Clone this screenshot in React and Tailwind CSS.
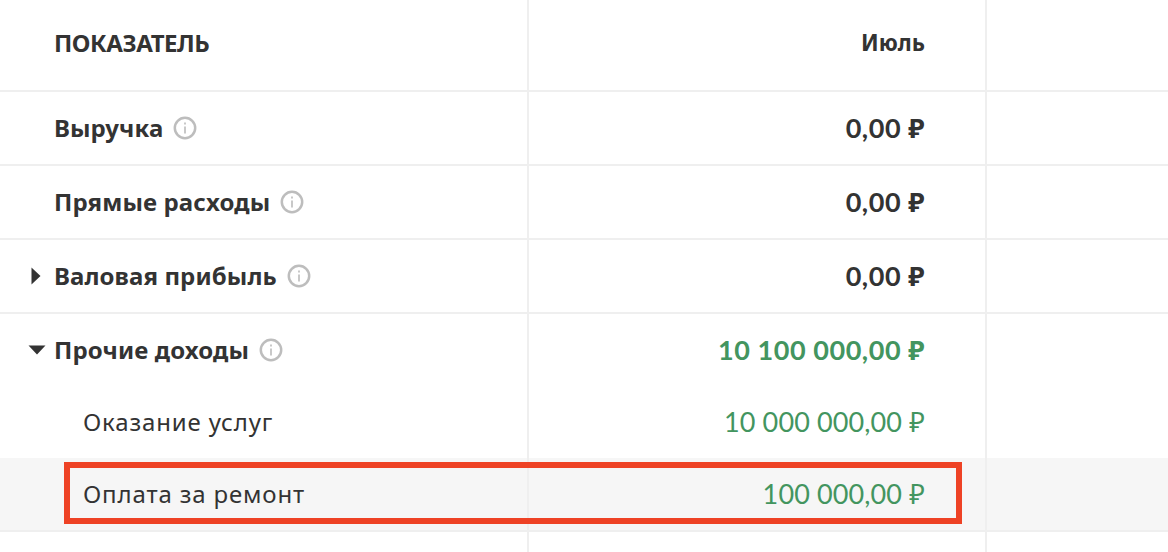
import React from "react";

const font = { fontFamily: '"Noto Sans", sans-serif' };

const Info = () => (
  <svg width="24" height="24" viewBox="0 0 24 24" className="shrink-0" fill="none">
    <circle cx="12" cy="12" r="10.2" stroke="#bdbdbd" strokeWidth="2.5" />
    <rect x="11" y="10.5" width="2" height="7" fill="#c8c8c8" />
    <rect x="11" y="6.5" width="2" height="2" fill="#c8c8c8" />
  </svg>
);

const Right = () => (
  <svg width="10" height="18" viewBox="0 0 10 18" className="absolute left-[31px]">
    <path d="M0.5 0.5 L9.5 9 L0.5 17.5 Z" fill="#333" />
  </svg>
);

const Down = () => (
  <svg width="18" height="10" viewBox="0 0 18 10" className="absolute left-[28px]">
    <path d="M0.5 0.5 H17.5 L9 9.5 Z" fill="#333" />
  </svg>
);

const Row = ({ label, value, h = "h-[74px]", border = true, bold = true, green, info, arrow, bg, head }) => (
  <div className={`grid grid-cols-[529px_458px_1fr] ${h} ${border ? "border-b-2 border-[#efefef]" : ""} ${bg || ""}`}>
    <div className={`relative flex items-center gap-[10px] border-r-2 border-[#efefef] ${bold ? "pl-[54px]" : "pl-[83px]"}`}>
      {arrow === "right" && <Right />}
      {arrow === "down" && <Down />}
      <span className={`text-[24px] leading-none ${head ? "-mt-[4px] tracking-[-0.45px]" : bold ? "tracking-[0.12px]" : "tracking-[0.85px]"} ${bold ? "font-bold text-[#333]" : "text-[#333]"}`}>{label}</span>
      {info && <Info />}
    </div>
    {head ? (
      <div className="-mt-[4px] flex items-center justify-end border-r-2 border-[#efefef] pr-[60px] text-[22.4px] font-bold leading-none text-[#333]">
        {value}
      </div>
    ) : (
      <div className={`flex items-center justify-end border-r-2 border-[#efefef] pr-[60px] pb-[2px] font-['Lato','Noto_Sans',sans-serif] text-[27px] leading-none ${bold ? "font-bold tracking-[0.55px]" : "tracking-[0.12px]"} ${green ? "text-[#43955f]" : "text-[#333]"}`}>
        {value}
      </div>
    )}
    <div />
  </div>
);

export default function App() {
  return (
    <div className="relative h-[552px] w-[1168px] overflow-hidden bg-white" style={font}>
      <Row h="h-[92px]" label="ПОКАЗАТЕЛЬ" value="Июль" head />
      <Row label="Выручка" value="0,00 ₽" info />
      <Row label="Прямые расходы" value="0,00 ₽" info />
      <Row label="Валовая прибыль" value="0,00 ₽" info arrow="right" />
      <Row h="h-[72px]" border={false} label="Прочие доходы" value="10 100 000,00 ₽" info arrow="down" green />
      <Row h="h-[72px]" border={false} bold={false} label="Оказание услуг" value="10 000 000,00 ₽" green />
      <Row h="h-[74px]" bold={false} label="Оплата за ремонт" value="100 000,00 ₽" green bg="bg-[#f6f6f6]" />
      <Row h="h-[40px]" border={false} label="" value="" />
      {/* красная рамка поверх строки */}
      <div className="absolute left-[64px] top-[462px] h-[62px] w-[898px] border-[6px] border-[#ee4225]" />
    </div>
  );
}
